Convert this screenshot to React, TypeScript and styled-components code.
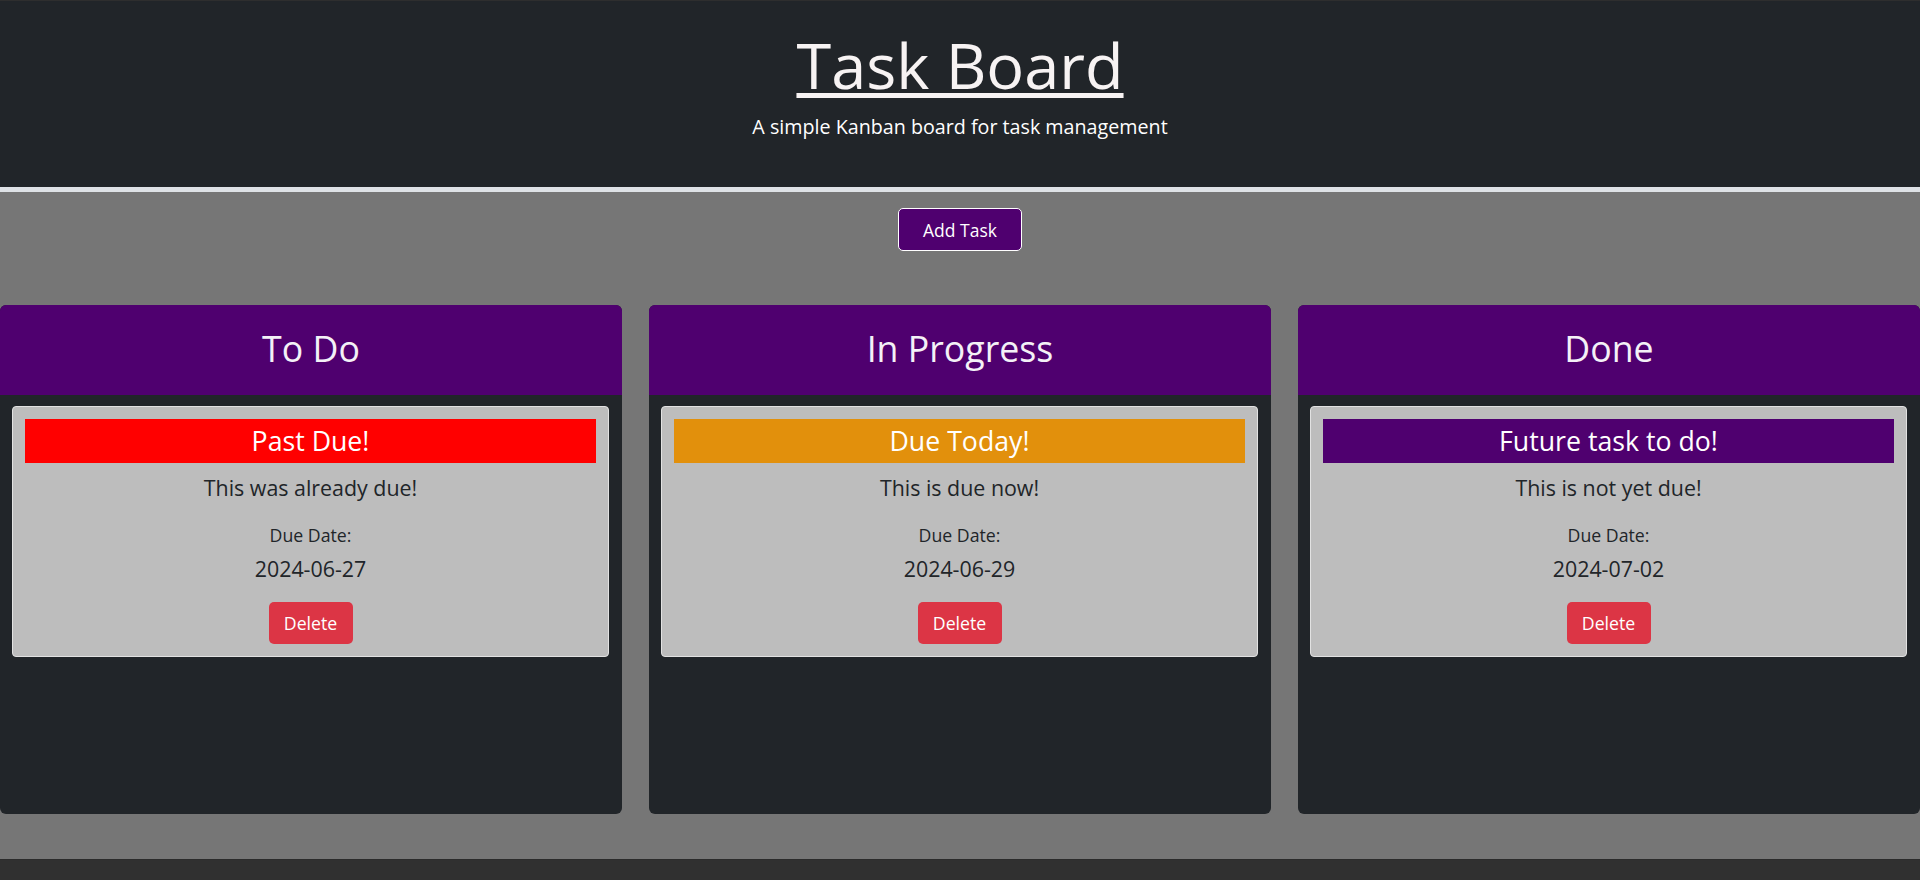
import React from "react";
import styled, { createGlobalStyle } from "styled-components";

const GlobalStyle = createGlobalStyle`
  html, body {
    margin: 0;
    padding: 0;
    background: #767676;
    font-family: "Open Sans", "Noto Sans", sans-serif;
  }
  * { box-sizing: border-box; }
`;

const Page = styled.div`
  display: flex;
  flex-direction: column;
  min-height: 880px;
`;

const Header = styled.header`
  background: #212529;
  border-top: 1px solid #2e2e2e;
  border-bottom: 5px solid #dee2e6;
  height: 192px;
  padding-top: 26px;
  text-align: center;
`;

const Title = styled.h1`
  margin: 0;
  font-size: 63px;
  line-height: 76px;
  font-weight: 400;
  color: #f7f3f3;
  text-decoration: underline;
  text-decoration-thickness: 5px;
  text-underline-offset: 4px;
`;

const Subtitle = styled.p`
  margin: 10px 0 0;
  font-size: 19.7px;
  line-height: 28px;
  color: #ffffff;
`;

const Main = styled.main`
  flex: 1;
  background: #767676;
  padding: 16px 0 45px;
  display: flex;
  flex-direction: column;
  align-items: center;
`;

const AddButton = styled.button`
  width: 124px;
  height: 43px;
  background: #4f006f;
  color: #ffffff;
  border: 1px solid #ffffff;
  border-radius: 5px;
  font-family: inherit;
  font-size: 17.5px;
  padding: 0;
  cursor: pointer;
`;

const Board = styled.div`
  margin-top: 54px;
  width: 100%;
  display: grid;
  grid-template-columns: repeat(3, 1fr);
  gap: 27px;
`;

const Column = styled.section`
  height: 509px;
  background: #212529;
  border-radius: 6px;
  overflow: hidden;
  display: flex;
  flex-direction: column;
`;

const ColumnHeader = styled.h2`
  margin: 0;
  height: 90px;
  padding-top: 18px;
  background: #4f006f;
  color: #f4f1f7;
  font-weight: 400;
  font-size: 35.7px;
  line-height: 50px;
  text-align: center;
`;

const ColumnBody = styled.div`
  padding: 11px 13px 12px 12px;
  display: flex;
  flex-direction: column;
`;

const Card = styled.div`
  background: #bdbdbd;
  border: 1px solid #e2e2e2;
  border-radius: 4px;
  padding: 12px;
  display: flex;
  flex-direction: column;
  align-items: center;
  text-align: center;
  color: #212529;
`;

const CardTitle = styled.div<{ $bg: string }>`
  width: 100%;
  height: 44px;
  background: ${(p) => p.$bg};
  color: #ffffff;
  font-size: 26.7px;
  line-height: 44px;
`;

const Description = styled.p`
  margin: 9px 0 0;
  font-size: 21.4px;
  line-height: 32px;
`;

const DueLabel = styled.p`
  margin: 18px 0 0;
  font-size: 17.7px;
  line-height: 27px;
`;

const DueDate = styled.p`
  margin: 5px 0 0;
  font-size: 21.4px;
  line-height: 30px;
`;

const DeleteButton = styled.button`
  margin-top: 18px;
  width: 84px;
  height: 42px;
  background: #dc3545;
  color: #ffffff;
  border: none;
  border-radius: 5px;
  font-family: inherit;
  font-size: 17.7px;
  padding: 0;
  cursor: pointer;
`;

const Footer = styled.footer`
  height: 21px;
  background: #303030;
  border-top: 1px solid #2b2b2b;
`;

type Task = {
  title: string;
  color: string;
  desc: string;
  date: string;
};

const columns: { name: string; tasks: Task[] }[] = [
  {
    name: "To Do",
    tasks: [{ title: "Past Due!", color: "#ff0000", desc: "This was already due!", date: "2024-06-27" }],
  },
  {
    name: "In Progress",
    tasks: [{ title: "Due Today!", color: "#e2900c", desc: "This is due now!", date: "2024-06-29" }],
  },
  {
    name: "Done",
    tasks: [{ title: "Future task to do!", color: "#4f006f", desc: "This is not yet due!", date: "2024-07-02" }],
  },
];

export default function App() {
  return (
    <Page>
      <GlobalStyle />
      <Header>
        <Title>Task Board</Title>
        <Subtitle>A simple Kanban board for task management</Subtitle>
      </Header>
      <Main>
        <AddButton>Add Task</AddButton>
        <Board>
          {columns.map((col) => (
            <Column key={col.name}>
              <ColumnHeader>{col.name}</ColumnHeader>
              <ColumnBody>
                {col.tasks.map((t) => (
                  <Card key={t.title}>
                    <CardTitle $bg={t.color}>{t.title}</CardTitle>
                    <Description>{t.desc}</Description>
                    <DueLabel>Due Date:</DueLabel>
                    <DueDate>{t.date}</DueDate>
                    <DeleteButton>Delete</DeleteButton>
                  </Card>
                ))}
              </ColumnBody>
            </Column>
          ))}
        </Board>
      </Main>
      <Footer />
    </Page>
  );
}
